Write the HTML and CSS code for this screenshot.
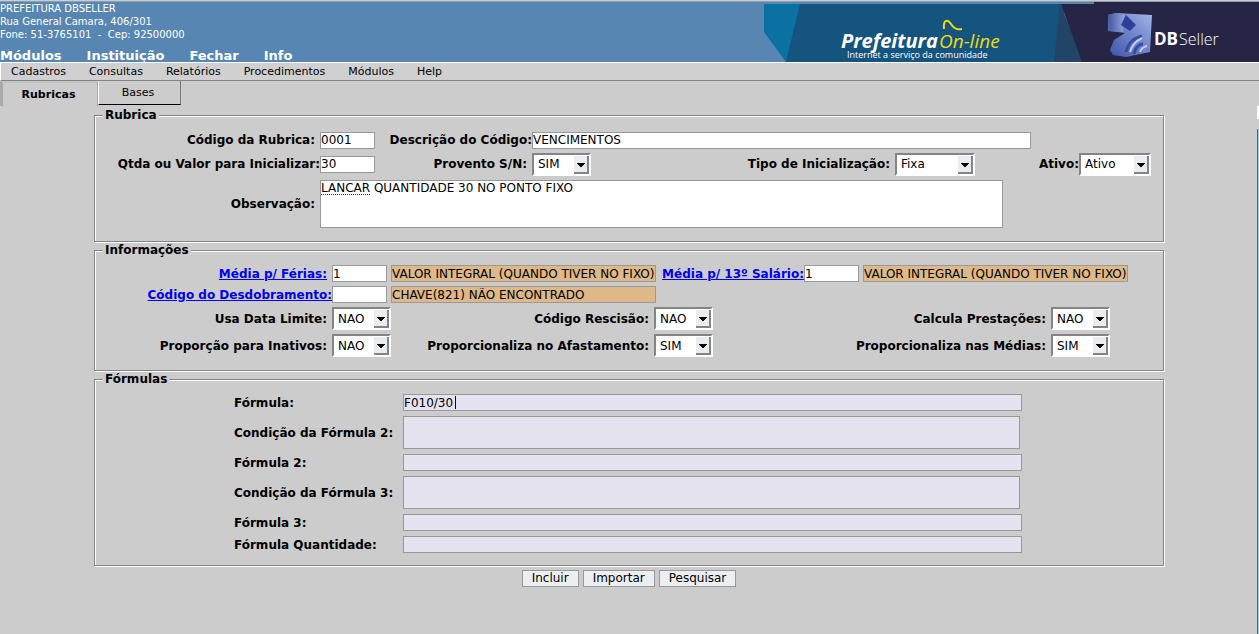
FILE: index.html
```html
<!DOCTYPE html>
<html lang="pt-BR">
<head>
<meta charset="utf-8">
<title>DBSeller - Rubricas</title>
<link rel="stylesheet" href="styles.css">
</head>
<body>
<header class="top">
  <div class="org">
    <address class="address">PREFEITURA DBSELLER<br>Rua General Camara, 406/301<br>Fone: 51-3765101 &nbsp;- &nbsp;Cep: 92500000</address>
    <nav class="modules">
      <a href="#">Módulos</a><a href="#">Instituição</a><a href="#">Fechar</a><a href="#">Info</a>
    </nav>
  </div>
  <svg class="banner" viewBox="0 0 495 60" role="img" aria-label="Prefeitura On-line DBSeller">
    <defs>
      <linearGradient id="top" x1="0" y1="0" x2="1" y2="0"><stop offset="0" stop-color="#46549f"/><stop offset="1" stop-color="#8fa2da"/></linearGradient>
      <linearGradient id="face" x1="0" y1="1" x2="1" y2="0"><stop offset="0" stop-color="#3f52a8"/><stop offset=".5" stop-color="#6c82c9"/><stop offset="1" stop-color="#a5b5e6"/></linearGradient>
    </defs>
    <path fill="#14547f" d="M0 2H300V60H22Z"/>
    <path fill="#0b70a2" d="M0 2H36L22 60L0 30Z"/>
    <path fill="#214467" d="M296 2L320 60H290Z"/>
    <path fill="#262546" d="M297 2H330V0H495V60H318Z"/>
    <text class="brand" x="77" y="46">Prefeitura</text>
    <text class="online" x="175" y="46">On-line</text>
    <path d="M180 27C179 17 184 17 187 22S193 28 198 27" fill="none" stroke="#eedb12" stroke-width="2"/>
    <text class="slogan" x="83" y="56">Internet a serviço da comunidade</text>
    <path fill="url(#face)" d="M352 11L388 13L386 50L362 55L349 53L346 48L350 38L361 31L344 29L344 13Z"/>
    <path fill="url(#top)" d="M344 13L352 11L360 12L359 30L345 29Z"/>
    <path fill="#2f3f97" d="M362 13L372 23L366 29L357 23Z"/>
    <path fill="none" stroke="#3a4ba2" stroke-width="3" d="M362 50C364 42 369 36 378 34M370 52C371 46 375 42 379 42"/>
    <path fill="none" stroke="#c3cef3" stroke-width="2" d="M366 50C368 43 372 39 378 36M376 50C377 47 379 45 383 44"/>
    <text class="db" x="390" y="43">DB</text>
    <text class="seller" x="415" y="43">Seller</text>
  </svg>
</header>
<nav class="menu">
  <a href="#">Cadastros</a><a href="#">Consultas</a><a href="#">Relatórios</a><a href="#">Procedimentos</a><a href="#">Módulos</a><a href="#">Help</a>
</nav>
<div class="workspace">
  <div class="page">
    <div class="tabs">
      <button type="button" class="tab active">Rubricas</button>
      <button type="button" class="tab">Bases</button>
    </div>
    <form class="form">
      <fieldset class="group rubrica">
        <legend>Rubrica</legend>
        <div class="row">
          <label class="gap" for="codigo">Código da Rubrica:</label><input id="codigo" class="short" value="0001">
          <label class="next" for="descricao">Descrição do Código:</label><input id="descricao" class="desc" value="VENCIMENTOS">
        </div>
        <div class="row">
          <label for="qtda">Qtda ou Valor para Inicializar:</label><input id="qtda" class="short" value="30">
          <label class="gap next" for="provento">Provento S/N:</label><select id="provento"><option>SIM</option></select>
          <label class="gap tipo" for="tipo">Tipo de Inicialização:</label><select id="tipo" class="wide"><option>Fixa</option></select>
          <label class="ativo" for="ativo">Ativo:</label><select id="ativo" class="medium"><option>Ativo</option></select>
        </div>
        <div class="row">
          <label class="gap" for="obs">Observação:</label>
          <div id="obs" class="obs" role="textbox" aria-multiline="true" contenteditable="true" spellcheck="false"><span class="misspelt">LANCAR</span> QUANTIDADE 30 NO PONTO FIXO</div>
        </div>
      </fieldset>
      <fieldset class="group info">
        <legend>Informações</legend>
        <div class="row">
          <label class="gap" for="ferias"><a href="#">Média p/ Férias:</a></label><input id="ferias" class="short" value="1">
          <input class="lookup" aria-label="Descrição da média de férias" value="VALOR INTEGRAL (QUANDO TIVER NO FIXO)" readonly>
          <label class="salario" for="salario"><a href="#">Média p/ 13º Salário:</a></label><input id="salario" class="short" value="1">
          <input class="lookup" aria-label="Descrição da média de 13º salário" value="VALOR INTEGRAL (QUANDO TIVER NO FIXO)" readonly>
        </div>
        <div class="row">
          <label for="desdobramento"><a href="#">Código do Desdobramento:</a></label><input id="desdobramento" class="short">
          <input class="lookup" aria-label="Descrição do desdobramento" value="CHAVE(821) NÃO ENCONTRADO" readonly>
        </div>
        <div class="row">
          <label class="gap" for="limite">Usa Data Limite:</label><select id="limite"><option>NAO</option></select>
          <label class="gap second" for="rescisao">Código Rescisão:</label><select id="rescisao"><option>NAO</option></select>
          <label class="gap third" for="prestacoes">Calcula Prestações:</label><select id="prestacoes"><option>NAO</option></select>
        </div>
        <div class="row">
          <label class="gap" for="inativos">Proporção para Inativos:</label><select id="inativos"><option>NAO</option></select>
          <label class="gap second" for="afastamento">Proporcionaliza no Afastamento:</label><select id="afastamento"><option>SIM</option></select>
          <label class="gap third" for="medias">Proporcionaliza nas Médias:</label><select id="medias"><option>SIM</option></select>
        </div>
      </fieldset>
      <fieldset class="group formulas">
        <legend>Fórmulas</legend>
        <div class="formula-grid">
          <label for="f1">Fórmula:</label><span class="caret-field"><input id="f1" value="F010/30"><i class="caret"></i></span>
          <label for="c2">Condição da Fórmula 2:</label><textarea id="c2"></textarea>
          <label for="f2">Fórmula 2:</label><input id="f2">
          <label for="c3">Condição da Fórmula 3:</label><textarea id="c3"></textarea>
          <label for="f3">Fórmula 3:</label><input id="f3">
          <label for="fq">Fórmula Quantidade:</label><input id="fq">
        </div>
      </fieldset>
      <div class="actions">
        <button type="button">Incluir</button><button type="button">Importar</button><button type="button">Pesquisar</button>
      </div>
    </form>
  </div>
  <div class="edge"></div>
</div>
</body>
</html>
```
FILE: styles.css
```css
* { box-sizing: border-box; }
body {
  margin: 0;
  min-height: 100vh;
  display: flex;
  flex-direction: column;
  background: #ccc;
  color: #000;
  font: 12px/16px "DejaVu Sans", sans-serif;
}
a { color: inherit; text-decoration: none; }

.top {
  display: flex;
  justify-content: space-between;
  height: 63px;
  border-top: 1px solid #ccc;
  border-bottom: 1px solid #fff;
  box-shadow: inset 0 1px #8ba0b0;
  background: #5786b2;
  color: #fff;
}
.address { padding-top: 1px; font: 10px/13px "DejaVu Sans", sans-serif; }
.modules { display: flex; gap: 25px; padding-top: 7px; font-size: 13px; font-weight: bold; }
.banner { width: 495px; height: 60px; margin-top: 1px; }
.brand { font: italic bold 20px "Open Sans", sans-serif; fill: #fff; }
.online { font: italic 19px "Open Sans", sans-serif; fill: #eedb12; }
.slogan { font: 9px "Open Sans", sans-serif; fill: #fff; }
.db { font: bold 17px "Open Sans", sans-serif; fill: #fff; }
.seller { font: 300 16px "Open Sans", sans-serif; fill: #fff; }

.menu {
  display: flex;
  gap: 23px;
  height: 18px;
  padding-left: 10px;
  border-left: 1px solid #fff;
  border-bottom: 1px solid #848484;
  background: #d0d0d0;
  font-size: 11px;
  line-height: 18px;
}

.workspace { display: flex; flex: 1; }
.page { flex: 1; min-width: 0; }
.edge {
  width: 2px;
  margin-top: 25px;
  background:
    linear-gradient(#fff 0 13px, #ccc 13px 23px, transparent 23px),
    linear-gradient(to right, #2a6eb0 1px, #8fd0ec 1px);
}
.tabs { display: flex; align-items: flex-start; }
.tab {
  width: 83px;
  height: 24px;
  padding: 0 3px 0 0;
  border: 0;
  border-left: 1px solid #fff;
  border-right: 1px solid #777;
  border-bottom: 1px solid #000;
  background: #ccc;
  font: 11px/16px "DejaVu Sans", sans-serif;
}
.tab.active {
  width: 98px;
  height: 25px;
  padding: 0 3px 0 0;
  border: 0;
  border-top: 2px solid #c3c3c3;
  border-left: 3px solid #a9a9a9;
  border-right: 1px solid #a9a9a9;
  font-weight: bold;
}

.form { margin: 2px 93px 0 94px; }
.group {
  min-width: 0;
  margin: 0;
  border: 1px solid #848484;
  box-shadow: 1px 1px #fff, inset 1px 1px #fff;
}
.group + .group { margin-top: 1px; }
.group legend {
  margin-left: 8px;
  padding: 0 2px;
  background: #ccc;
  font-weight: bold;
  line-height: 14px;
}
.rubrica { padding: 6px 0 13px; }
.info { padding: 6px 0 11px; }
.formulas { padding: 8px 0 12px; }
.row { display: flex; align-items: center; }
.row label { flex: none; text-align: right; font-weight: bold; }
.row .gap { padding-right: 5px; }
.row label a { color: #00e; text-decoration: underline; }

input, textarea, .obs {
  margin: 0;
  padding: 0;
  border: 1px solid #999;
  border-radius: 0;
  background: #fff;
  font: 12px/15px "DejaVu Sans", sans-serif;
  outline: 0;
}
input { height: 17px; }
.short { width: 55px; }
.desc { width: 499px; }
.obs { width: 683px; height: 48px; }
.misspelt { text-decoration: underline dotted #c00 1px; text-underline-offset: 2px; }
.lookup { width: 265px; margin-left: 4px; background: #deb887; }

select {
  width: 59px;
  height: 23px;
  padding: 0 0 0 4px;
  border: 2px solid;
  border-color: #848484 #fff #fff #848484;
  border-radius: 0;
  appearance: none;
  font: 12px/18px "DejaVu Sans", sans-serif;
  background:
    linear-gradient(#000, #000) right 4px top 8px / 8px 1px no-repeat,
    linear-gradient(#000, #000) right 5px top 9px / 6px 1px no-repeat,
    linear-gradient(#000, #000) right 6px top 10px / 4px 1px no-repeat,
    linear-gradient(#000, #000) right 7px top 11px / 2px 1px no-repeat,
    linear-gradient(#e9edf0, #e9edf0) right 2px top 1px / 13px 16px no-repeat,
    linear-gradient(#848484, #848484) right 0 top 1px / 15px 18px no-repeat,
    #fff;
}
.wide { width: 80px; }
.medium { width: 72px; }

.rubrica .row { min-height: 24px; }
.rubrica label:first-child { width: 225px; }
.rubrica .next { width: 157px; }
.rubrica .tipo { width: 304px; }
.rubrica .ativo { width: 104px; }
.rubrica .row:last-child { padding-top: 4px; }

.info .row { min-height: 27px; }
.info .row:nth-of-type(-n+2) { min-height: 21px; }
.info label:first-child { width: 237px; }
.info .salario { width: 148px; }
.info .second { width: 263px; }
.info .third { width: 338px; }

.formula-grid {
  display: grid;
  grid-template-columns: 165px 621px;
  row-gap: 5px;
  column-gap: 4px;
  align-items: center;
  justify-content: center;
}
.formula-grid label { font-weight: bold; }
.formula-grid input, .formula-grid textarea { background: #e6e3f1; }
.formula-grid input { width: 619px; }
.formula-grid textarea { display: block; width: 617px; height: 33px; resize: none; }
.caret-field { position: relative; display: flex; }
.caret { position: absolute; left: 52px; top: 2px; width: 1px; height: 13px; background: #000; }

.actions { display: flex; justify-content: center; gap: 4px; margin-top: 4px; }
.actions button {
  height: 17px;
  padding: 0 9px;
  border: 1px solid #999;
  border-radius: 0;
  background: #ebeff2;
  font: 12px/15px "DejaVu Sans", sans-serif;
}
```
